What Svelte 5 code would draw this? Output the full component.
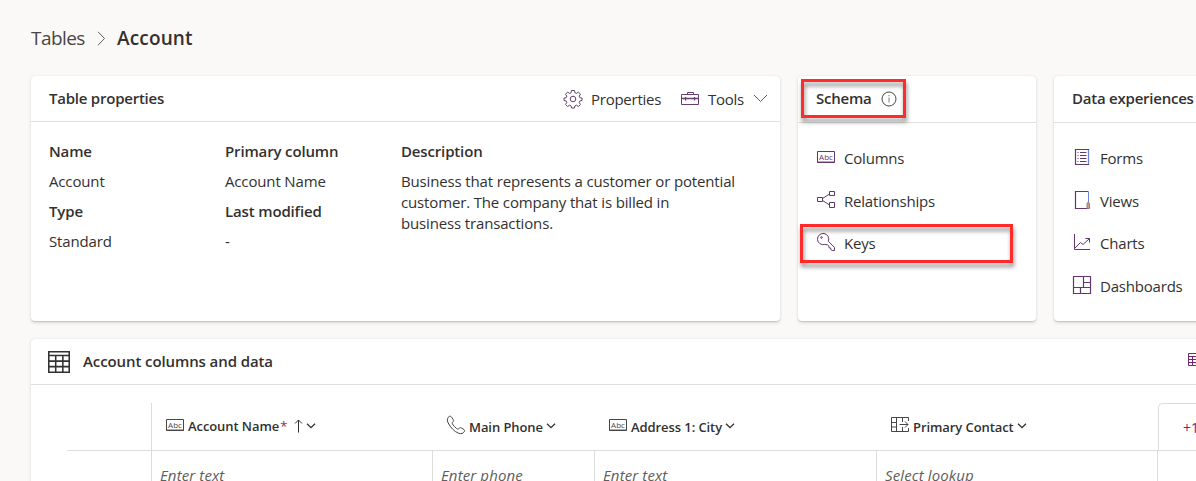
<script>
  const schema = [
    { label: 'Columns', icon: 'abc' },
    { label: 'Relationships', icon: 'share' },
    { label: 'Keys', icon: 'key' }
  ];
  const experiences = [
    { label: 'Forms', icon: 'form' },
    { label: 'Views', icon: 'view' },
    { label: 'Charts', icon: 'chart' },
    { label: 'Dashboards', icon: 'dashboard' }
  ];
  const columns = [
    { label: 'Account Name', icon: 'abc', hint: 'Enter text', required: true },
    { label: 'Main Phone', icon: 'phone', hint: 'Enter phone' },
    { label: 'Address 1: City', icon: 'abc', hint: 'Enter text' },
    { label: 'Primary Contact', icon: 'lookup', hint: 'Select lookup' }
  ];
</script>

{#snippet icon(name)}
  <svg class="icon {name}" width="20" height="20" viewBox="0 0 20 20" fill="none" stroke="currentColor" stroke-width="1">
    {#if name === 'abc'}
      <path d="M1.500 4.500h17v11h-17z" />
      <path d="M1 15h18" stroke-width="2" opacity=".45" />
      <text x="10" y="12.500" text-anchor="middle">Abc</text>
    {:else if name === 'share'}
      <path d="M1.500 7.500h5v4h-5zM13.500 1.500h5v4h-5zM13.500 12.500h5v5h-5zM6.500 8.500L13.500 4M6.500 10.500L13.500 15" />
    {:else if name === 'key'}
      <path d="M12.300 9.200A5.600 5.600 0 1 0 8.800 12.400L11.500 12.800L13 14.200V15.800L14.700 16V17.500L16.300 18.500H18.500V15.500Z" />
      <circle cx="5.500" cy="5.500" r=".8" />
    {:else if name === 'form'}
      <path stroke-width="1.200" d="M3.500 2.500h13v15h-13z" />
      <path d="M8 5.500h6.500M8 8.500h6.500M8 11.500h6.500M8 14.500h6.500M5.500 5.500h1M5.500 8.500h1M5.500 11.500h1M5.500 14.500h1" />
      <path d="M16.500 3v14" stroke="#6d83d8" />
    {:else if name === 'view'}
      <path stroke-width="1.200" d="M16.500 1.500h-13v17h13" />
      <path d="M16.500 2v11" stroke="#6d83d8" />
      <path d="M15 18.500v-5c0-1.300 2.500-1.300 2.500 0v5z" fill="#c7a08c" stroke="#a07875" />
    {:else if name === 'chart'}
      <path d="M2.500 2v15.500H18M3 16L8.500 10.500L11 12.500L17.500 6.500M13.500 6.500h4v4" />
    {:else if name === 'dashboard'}
      <path stroke-width="1.200" d="M1.500 1.500h17v17h-17zM1.500 12.500h17M11.500 1.500v11M11.500 7.500h7M8.500 12.500v6" />
    {:else if name === 'gear'}
      <circle cx="10" cy="10" r="2.800" />
      <path d="M8.500 1.500h3l.4 2.200 1.600.7 1.900-1.300 2.100 2.100-1.300 1.900.7 1.600 2.100.4v2.400l-2.100.4-.7 1.600 1.300 1.900-2.100 2.100-1.900-1.300-1.600.7-.4 2.100h-3l-.4-2.100-1.600-.7-1.900 1.300-2.100-2.100 1.300-1.900-.7-1.600-2.100-.4V9.100l2.100-.4.7-1.600-1.300-1.900 2.100-2.100 1.900 1.300 1.600-.7z" />
    {:else if name === 'tools'}
      <path d="M1.500 5.500h17v10h-17zM7.500 5.500v-2h6v2" />
      <path stroke-width="1.300" d="M1.500 9.500h17M5.500 8v3.500M14.500 8v3.500" />
    {:else if name === 'phone'}
      <path d="M3.200 1.500C1 3 .8 5.300 2.200 8C4.500 12.300 8 16.500 12.500 18.200C15.300 19.200 17.200 18.500 18.400 16.400C18.700 15.700 18.500 15 17.900 14.500L15.300 12.900C14.500 12.500 13.800 12.700 13.200 13.300C12.400 14.200 11.700 14.200 10.700 13.600C8.900 12.300 7.600 10.800 6.500 9C6 8 6.200 7.400 7 6.700C7.700 6.200 7.800 5.500 7.300 4.700L5.500 2C4.900 1.200 4.100 1 3.200 1.500Z" />
    {:else if name === 'lookup'}
      <path d="M16 2.500h2.500v3.500M18.500 13v3.500h-17v-14H16M6.500 2.500v14M1.500 7.500h5M1.500 12h5M12.500 2.500v4.500M12.500 12v4.500M9.500 9.500h8.500M15 6.500l3 3-3 3" />
    {:else if name === 'table'}
      <path stroke-width="1.400" d="M0 .7h20M0 4h20M0 9.200h20M0 14.200h20M0 19.300h20M.7 0v20M7 4v16M13.500 4v16M19.300 0v20" />
    {/if}
  </svg>
{/snippet}

{#snippet chevron()}
  <svg class="chevron" width="10" height="6" viewBox="0 0 10 6" fill="none" stroke="currentColor" stroke-width="1.300"><path d="M1 .7L5 4.700L9 .7" /></svg>
{/snippet}

<main>
  <nav>
    <span class="parent">Tables</span>
    <svg width="9" height="15" viewBox="0 0 9 15" fill="none" stroke="currentColor"><path d="M1 .8L7.500 7.500L1 14.200" /></svg>
    <strong>Account</strong>
  </nav>

  <div class="cards">
    <section class="card properties">
      <header>
        <h2>Table properties</h2>
        <div class="actions">
          {@render icon('gear')}<span class="act-props">Properties</span>
          {@render icon('tools')}<span class="act-tools">Tools</span>
          <svg class="wide-chevron" width="15" height="9" viewBox="0 0 15 9" fill="none" stroke="currentColor"><path d="M1 1L7.500 7.500L14 1" /></svg>
        </div>
      </header>
      <div class="facts">
        <dl>
          <dt>Name</dt><dd>Account</dd>
          <dt>Type</dt><dd>Standard</dd>
        </dl>
        <dl>
          <dt>Primary column</dt><dd>Account Name</dd>
          <dt>Last modified</dt><dd>-</dd>
        </dl>
        <dl>
          <dt>Description</dt>
          <dd class="desc">Business that represents a customer or potential<br />customer. The company that is billed in<br />business transactions.</dd>
        </dl>
      </div>
    </section>

    <section class="card schema">
      <header>
        <h2>Schema</h2>
        <svg class="info" width="16" height="16" viewBox="0 0 16 16" fill="none" stroke="currentColor"><circle cx="8" cy="8" r="7" /><path d="M8 6.500v5M8 4v1.300" opacity=".7" /></svg>
      </header>
      <ul>
        {#each schema as item}<li>{@render icon(item.icon)}<span>{item.label}</span></li>{/each}
      </ul>
      <div class="mark mark-title"></div>
      <div class="mark mark-keys"></div>
    </section>

    <section class="card experiences">
      <header><h2>Data experiences</h2></header>
      <ul>
        {#each experiences as item}<li>{@render icon(item.icon)}<span>{item.label}</span></li>{/each}
      </ul>
    </section>
  </div>

  <section class="card data">
    <header>
      {@render icon('table')}
      <h2>Account columns and data</h2>
      <svg class="edit" width="20" height="14" viewBox="0 0 20 14" fill="none" stroke="currentColor"><path d="M1.500 .5h18v12H1.500zM1.500 3.500h18M1.500 6.500h18M1.500 9.500h18M5.500 3v10M12.500 3v10" /></svg>
    </header>
    <div class="grid">
      <div class="cell head"></div>
      {#each columns as col}
        <div class="cell head">
          {@render icon(col.icon)}<span class="label" class:plain={!col.required}>{col.label}</span>
          {#if col.required}
            <b>*</b>
            <svg class="sort" width="9" height="14" viewBox="0 0 9 14" fill="none" stroke="currentColor"><path d="M4.500 13.500V1M1 4.500L4.500 1L8 4.500" /></svg>
          {/if}
          {@render chevron()}
        </div>
      {/each}
      <div class="cell head more"><span>+1</span></div>
      <div class="cell"></div>
      {#each columns as col}<div class="cell hint">{col.hint}</div>{/each}
      <div class="cell"></div>
    </div>
  </section>
</main>

<style>
  :global(body) { background: #faf9f8; overflow: hidden; }
  main {
    box-sizing: border-box;
    width: 1196px;
    height: 481px;
    overflow: hidden;
    padding: 24px 0 0 31px;
    font-family: "Open Sans", "Noto Sans", sans-serif;
    font-size: 15px;
    color: #323130;
    background: #faf9f8;
  }
  nav { display: flex; align-items: center; height: 28px; font-size: 19px; white-space: nowrap; }
  nav .parent { width: 66px; letter-spacing: -0.550px; color: #484644; }
  nav svg { width: 9px; margin-right: 11px; color: #605e5c; }
  nav strong { font-weight: 600; letter-spacing: 0.150px; }
  .cards { display: flex; gap: 18px; margin-top: 24px; }
  .card {
    position: relative;
    flex: none;
    box-sizing: border-box;
    background: #fff;
    border-radius: 4px;
    box-shadow: 0 1.600px 3.600px rgba(0, 0, 0, .13), 0 .3px .9px rgba(0, 0, 0, .11);
  }
  .cards .card { height: 245px; }
  .properties { width: 749px; }
  .schema { width: 238px; }
  .experiences { width: 238px; }
  header {
    display: flex;
    align-items: center;
    box-sizing: border-box;
    height: 46px;
    padding: 0 18px;
    border-bottom: 1px solid #e1dfdd;
    white-space: nowrap;
  }
  .schema header, .experiences header { height: 47px; }
  h2 { margin: 0; padding-bottom: 2px; font-size: 15px; font-weight: 600; letter-spacing: -0.230px; }
  .schema h2, .experiences h2 { padding-bottom: 3px; }
  .actions { display: flex; align-items: center; margin-left: auto; }
  .actions span { letter-spacing: -0.250px; }
  .actions .icon { color: #65406e; }
  .act-props { width: 89px; margin-left: 8px; }
  .act-tools { width: 45px; margin-left: 8px; }
  .wide-chevron { margin-right: -6px; color: #605e5c; }
  .facts { display: flex; padding: 14px 18px; }
  dl { width: 176px; margin: 0; line-height: 30px; white-space: nowrap; letter-spacing: -0.150px; }
  dt { font-weight: 600; }
  dd { margin: 0; }
  dd.desc { padding-top: 5px; line-height: 21px; }
  .info { margin-left: 9px; margin-bottom: 1px; color: #484644; }
  ul { list-style: none; margin: 0; padding: 14px 18px; }
  li { display: flex; align-items: center; gap: 8px; height: 42.600px; letter-spacing: -0.200px; }
  li .icon { margin-bottom: 2px; color: #65356e; }
  .icon { flex: none; }
  .icon text { font: 500 8px "Open Sans", sans-serif; letter-spacing: 0; fill: currentColor; stroke: none; }
  .mark { position: absolute; box-sizing: border-box; border: 3px solid #ff2a2a; filter: drop-shadow(1px 4px 2px rgba(0, 0, 0, .45)); }
  .mark-title { left: 3px; top: 3px; width: 105px; height: 39px; }
  .mark-keys { left: 2px; top: 148px; width: 213px; height: 39px; }
  .data { width: 1200px; height: 200px; margin-top: 18px; }
  .data h2 { margin-left: 13px; letter-spacing: -0.100px; }
  .data header .icon { width: 22px; height: 22px; margin-left: -1px; }
  .edit { flex: none; margin-left: auto; margin-right: 6px; margin-bottom: 4px; color: #742774; }
  .grid {
    display: grid;
    grid-template-columns: 85px 281px 162px 282px 281px 120px;
    grid-template-rows: 48px 60px;
    margin: 18px 0 0 36px;
  }
  .cell { box-sizing: border-box; border-right: 1px solid #dcdcdc; white-space: nowrap; }
  .head { display: flex; align-items: center; padding-bottom: 1px; border-bottom: 1px solid #dcdcdc; font-size: 13px; font-weight: 600; letter-spacing: -0.080px; }
  .cell.head:not(:first-child) { border-right: 0; }
  .head .icon { margin: 0 3px 3px 13px; color: #484644; }
  .label.plain { padding-top: 2px; }
  .head b { margin-left: 1px; color: #a4262c; font-weight: 400; }
  .sort { margin: 0 3px 0 7px; }
  .head .chevron { margin-left: 3px; }
  .head .sort + .chevron { margin-left: 0; }
  .cell.more { border: 1px solid #dcdcdc; border-radius: 5px 0 0 0; padding-left: 24px; padding-top: 2px; color: #742774; font-size: 14px; font-weight: 400; }
  .hint { padding: 14px 0 0 8px; font-size: 15px; line-height: 21px; font-style: italic; letter-spacing: 0.120px; color: #605e5c; }
</style>
